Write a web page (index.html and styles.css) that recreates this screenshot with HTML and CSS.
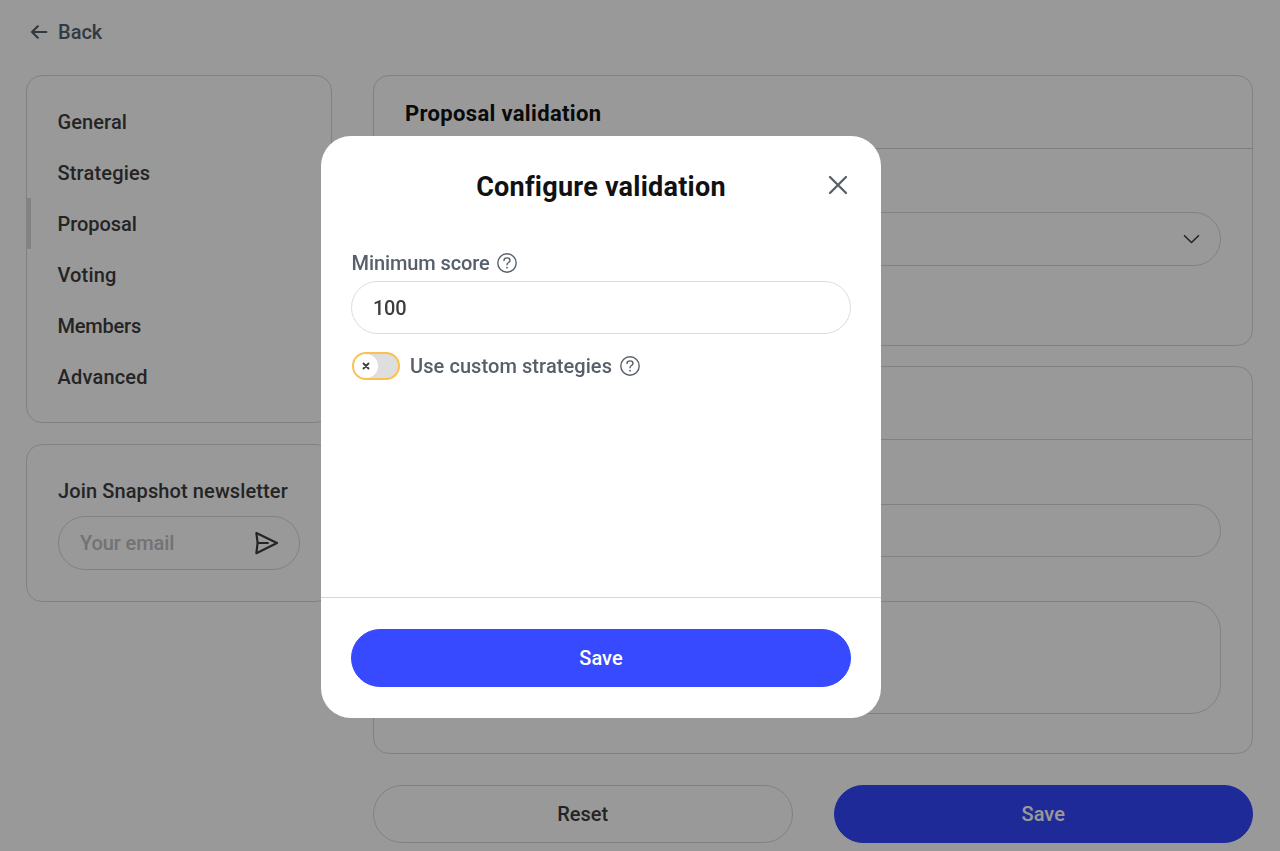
FILE: index.html
```html
<!DOCTYPE html>
<html lang="en">
<head>
<meta charset="utf-8">
<title>Space settings</title>
<link rel="stylesheet" href="styles.css">
</head>
<body>
<div class="page">
  <a class="back">
    <svg class="back-icon" width="18" height="16" viewBox="0 0 18 16"><path d="M7.800 2.200 2 8l5.800 5.800M2.300 8h14"/></svg>
    <span>Back</span>
  </a>
  <div class="columns">
    <aside class="sidebar">
      <nav class="card menu">
        <a class="item"><span class="t-general">General</span></a>
        <a class="item"><span class="t-strategies">Strategies</span></a>
        <a class="item active"><span class="t-proposal">Proposal</span></a>
        <a class="item"><span class="t-voting">Voting</span></a>
        <a class="item"><span class="t-members">Members</span></a>
        <a class="item"><span class="t-advanced">Advanced</span></a>
      </nav>
      <section class="card newsletter">
        <div class="news-title"><span>Join Snapshot newsletter</span></div>
        <div class="email">
          <span class="placeholder">Your email</span>
          <svg class="send" width="26" height="26" viewBox="0 0 26 26"><path d="M3.400 3 24 13 3.400 23.200 4.600 13zM4.600 13h10.200"/></svg>
        </div>
      </section>
    </aside>
    <main class="main">
      <section class="card validation">
        <h4 class="card-head"><span>Proposal validation</span></h4>
        <div class="card-body select-body">
          <div class="field select">
            <svg width="18" height="12" viewBox="0 0 18 12"><path d="M2.500 2.700 9.500 9.500l7-6.800"/></svg>
          </div>
        </div>
      </section>
      <section class="card details">
        <h4 class="card-head"></h4>
        <div class="card-body details-body">
          <div class="field"></div>
          <div class="field area"></div>
        </div>
      </section>
      <div class="actions">
        <button class="btn"><span class="t-reset">Reset</span></button>
        <button class="btn primary"><span class="t-save">Save</span></button>
      </div>
    </main>
  </div>
</div>
<div class="overlay">
  <div class="modal">
    <header class="modal-head">
      <h3><span>Configure validation</span></h3>
      <svg class="close" width="20" height="20" viewBox="0 0 20 20"><path d="m2 2 16 16M18 2 2 18"/></svg>
    </header>
    <div class="modal-body">
      <div class="label">
        <span class="t-min">Minimum score</span>
        <svg class="help" width="22" height="22" viewBox="0 0 22 22"><circle cx="11" cy="11" r="9.200"/><path d="M8 8.500C8 6.800 9.300 5.900 11 5.900s3 1 3 2.500c0 2.100-3 2.200-3 4.300"/><circle class="dot" cx="11" cy="15.700" r=".9"/></svg>
      </div>
      <div class="input"><span class="t-100">100</span></div>
      <div class="switch-row">
        <div class="switch"><div class="knob"><svg width="8" height="8" viewBox="0 0 8 8"><path d="m1.500 1.500 5 5M6.500 1.500l-5 5"/></svg></div></div>
        <span class="t-custom">Use custom strategies</span>
        <svg class="help" width="22" height="22" viewBox="0 0 22 22"><circle cx="11" cy="11" r="9.200"/><path d="M8 8.500C8 6.800 9.300 5.900 11 5.900s3 1 3 2.500c0 2.100-3 2.200-3 4.300"/><circle class="dot" cx="11" cy="15.700" r=".9"/></svg>
      </div>
    </div>
    <footer class="modal-foot"><button class="btn primary"><span class="t-save">Save</span></button></footer>
  </div>
</div>
</body>
</html>
```
FILE: styles.css
```css
* { box-sizing: border-box; }
html, body { margin: 0; height: 100%; overflow: hidden; }
body { background: #fff; color: #3d3d3d; font: 500 20px/24px Roboto, "Liberation Sans", sans-serif; }
span { white-space: nowrap; }
svg { flex: none; fill: none; stroke: currentColor; stroke-linecap: round; stroke-linejoin: round; }
.page { height: 851px; padding: 20px 27px 0 26px; overflow: hidden; }
.back { display: flex; align-items: center; gap: 10px; height: 24px; padding-left: 4px; color: #57606a; }
.back-icon { stroke-width: 2.2; }
.columns { display: flex; gap: 41px; margin-top: 31px; }
.sidebar { width: 306px; flex: none; }
.main { flex: 1; }
.card { border: 1px solid #d8d8d8; border-radius: 16px; }
.menu { height: 348px; padding-top: 20px; }
.item { display: flex; align-items: center; height: 51px; padding-left: 30.5px; }
.item.active { margin-left: -1px; border-left: 5px solid #dadada; padding-left: 26.5px; }
.t-general { letter-spacing: .1px; }
.t-strategies { letter-spacing: .17px; }
.t-proposal { letter-spacing: -.05px; }
.t-voting { letter-spacing: .15px; }
.t-members { letter-spacing: -.2px; }
.t-advanced { letter-spacing: .2px; }
.newsletter { height: 158px; margin-top: 21px; padding: 34px 31px 0; }
.news-title { height: 24px; letter-spacing: .11px; }
.email { display: flex; align-items: center; justify-content: space-between; height: 54px; margin-top: 13px; padding: 0 20px 0 21px; border: 1px solid #d8d8d8; border-radius: 27px; }
.placeholder { color: #bcc0c4; letter-spacing: -.1px; }
.send { stroke-width: 2.2; }
.card-head { display: flex; align-items: center; height: 73px; margin: 0; padding: 5px 31px 0; border-bottom: 1px solid #d8d8d8; color: #111; font-size: 22px; font-weight: 700; letter-spacing: .33px; }
.validation { height: 271px; }
.validation .card-head { height: 72.5px; border-bottom-color: #d0d0d0; }
.details { height: 388px; margin-top: 20px; }
.card-body { display: flex; flex-direction: column; padding: 0 31px; }
.select-body { padding-top: 63.5px; }
.details-body { padding-top: 64px; gap: 44px; }
.field { height: 53px; border: 1px solid #d8d8d8; border-radius: 27px; }
.select { display: flex; align-items: center; justify-content: flex-end; height: 54px; padding-right: 20px; stroke-width: 1.6; }
.area { height: 113px; border-radius: 30px; }
.actions { display: flex; gap: 41px; margin-top: 31px; }
.btn { flex: 1; height: 58px; padding: 0; border: 1px solid #d8d8d8; border-radius: 30px; background: transparent; color: #3d3d3d; font: inherit; }
.btn.primary { border-color: #384aff; background: #384aff; color: #fff; }
.actions .btn.primary { border-color: #3446ff; background: #3446ff; }
.overlay { position: fixed; inset: 0; display: flex; justify-content: center; align-items: flex-start; padding: 136px 0 0 2px; background: rgba(0, 0, 0, .4); }
.modal { display: flex; flex-direction: column; width: 560px; height: 582px; margin-right: 80px; border-radius: 30px; background: #fff; }
.modal-head { display: flex; align-items: center; height: 97px; padding: 0 33px 0 53px; }
.modal-head h3 { flex: 1; margin: 0; padding-top: 4px; text-align: center; color: #111; font-size: 27px; line-height: 34px; font-weight: 700; letter-spacing: .24px; }
.close { color: #57606a; stroke-width: 2.3; }
.modal-body { flex: 1; padding: 18px 30px 0; }
.label, .switch-row { display: flex; align-items: center; color: #57606a; }
.label { height: 24px; padding-left: .5px; gap: 6px; }
.t-min { letter-spacing: -.1px; }
.t-100 { letter-spacing: -.3px; }
.t-custom { letter-spacing: .08px; }
.help { stroke-width: 1.4; }
.help .dot { fill: currentColor; stroke: none; }
.input { display: flex; align-items: center; height: 53px; margin-top: 6px; padding-left: 21px; border: 1px solid #dcdcdc; border-radius: 27px; }
.switch-row { height: 28px; margin-top: 18px; gap: 7px; }
.switch-row .help, .t-custom { margin-top: -1px; }
.switch { width: 48px; height: 28px; margin: 0 3px 0 1px; padding: 2px; border: 2.5px solid #fbc04e; border-radius: 14px; background: #dedede; }
.knob { display: flex; align-items: center; justify-content: center; width: 24px; height: 24px; margin: -2px; border-radius: 50%; background: #fff; color: #3d3d3d; stroke-width: 1.8; }
.modal-foot { display: flex; height: 121px; padding: 31px 30px 0; border-top: 1px solid #d6d6d6; }
```
